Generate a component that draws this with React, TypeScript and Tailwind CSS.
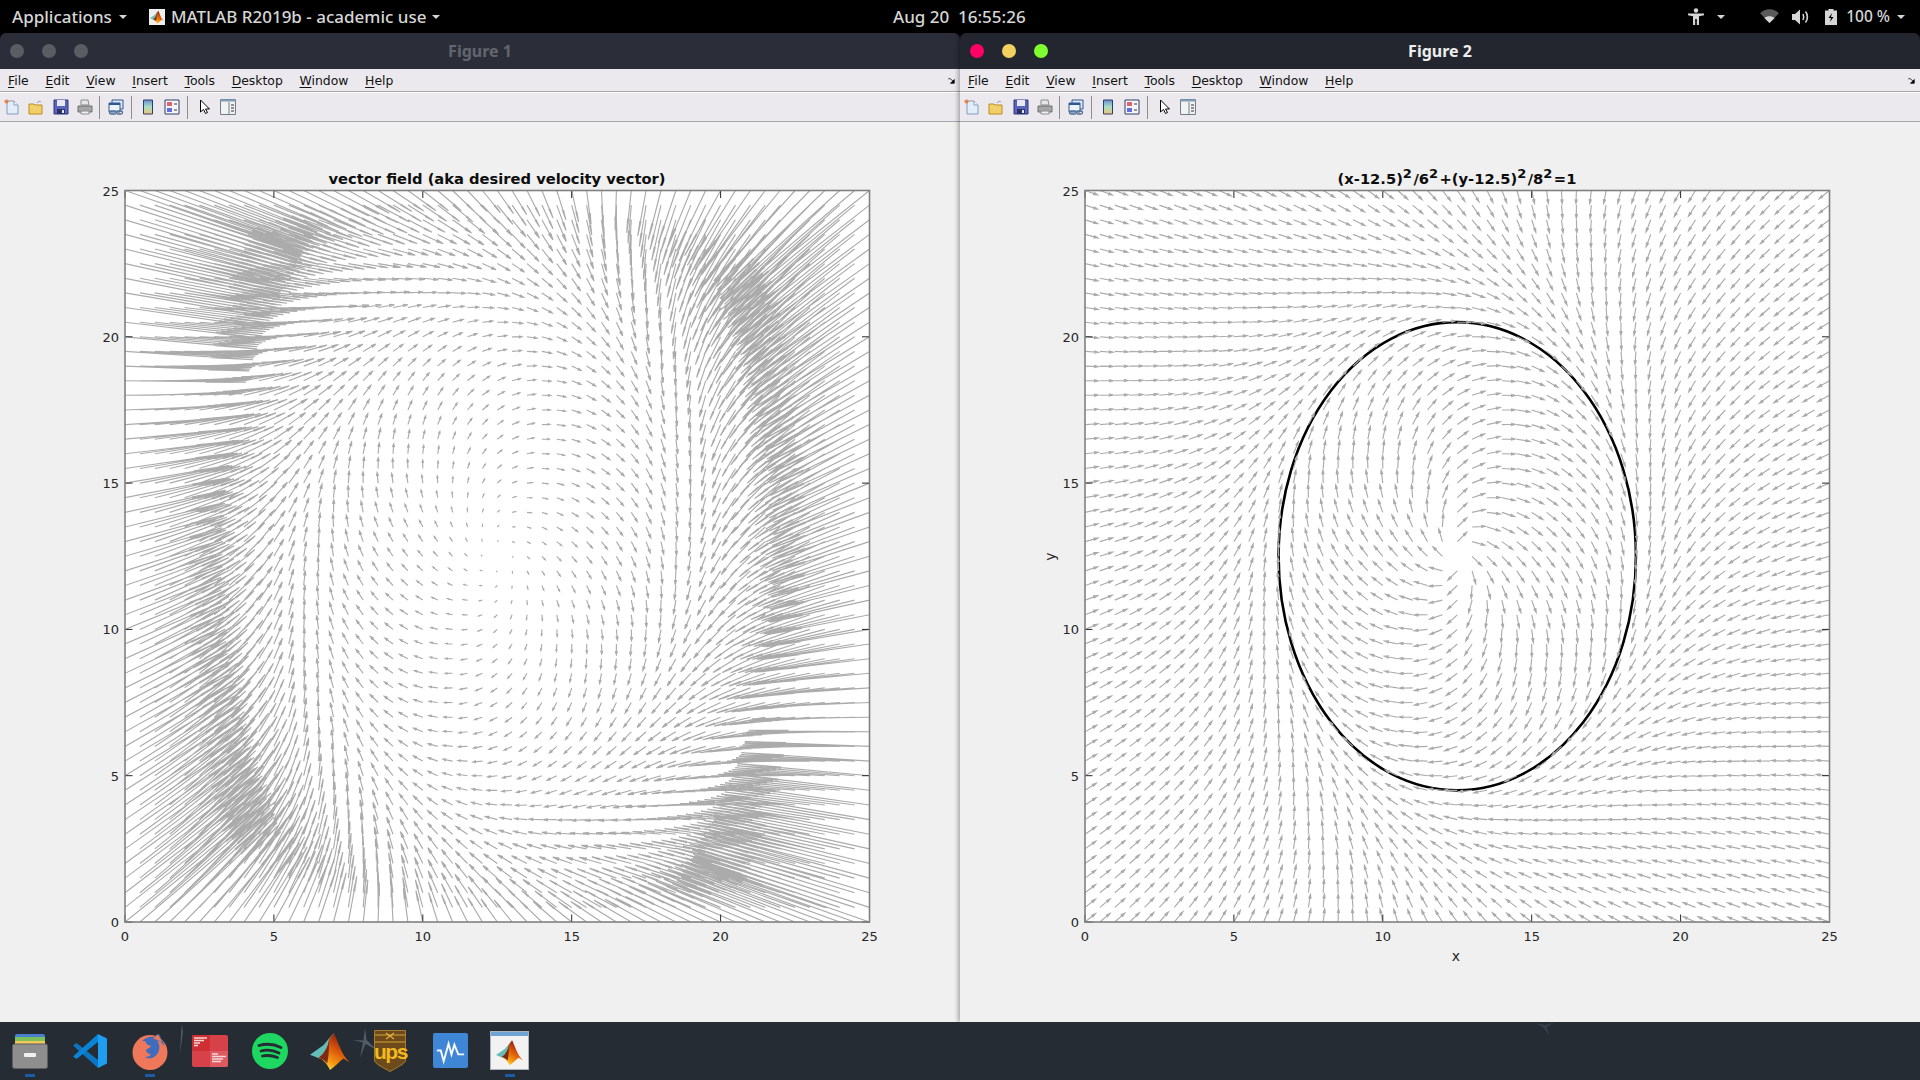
import { useMemo } from 'react';

// plot box inside the figure canvas (canvas starts at y=123 on the page)
const AX = { left: 125, right: 869.5, top: 68, bottom: 799.5 };
const px = (x: number) => AX.left + (x / 25) * (AX.right - AX.left);
const py = (y: number) => AX.bottom - (y / 25) * (AX.bottom - AX.top);

const field = (x: number, y: number) => {
    const dx = x - 12.5;
    const dy = y - 12.5;
    const phi = (dx * dx) / 36 + (dy * dy) / 64 - 1;
    const nx = (2 * dx) / 36;
    const ny = (2 * dy) / 64;
    return [ny - phi * nx, -nx - phi * ny];
};

const arrowPath = (x: number, y: number, u: number, v: number) => {
    const x0 = px(x);
    const y0 = py(y);
    const x1 = px(x + u);
    const y1 = py(y + v);
    const len = Math.hypot(x1 - x0, y1 - y0);
    if (len < 0.01) return '';
    const ex = (x1 - x0) / len;
    const ey = (y1 - y0) / len;
    // long arrows keep a long, slim head: it reads as a thicker last third of the line
    const back = len * 0.33;
    const half = len > 24 ? 0.55 : Math.min(len * 0.11, 1.2);
    const bx = x1 - ex * back;
    const by = y1 - ey * back;
    const f = (n: number) => n.toFixed(1);
    return (
        `M${f(x0)} ${f(y0)}L${f(x1)} ${f(y1)}` +
        `M${f(bx - ey * half)} ${f(by + ex * half)}L${f(x1)} ${f(y1)}L${f(bx + ey * half)} ${f(by - ex * half)}`
    );
};

const buildField = (normalized: boolean) => {
    let d = '';
    for (let i = 0; i <= 50; i++) {
        for (let j = 0; j <= 50; j++) {
            const x = i * 0.5;
            const y = j * 0.5;
            const [u, v] = field(x, y);
            const len = Math.hypot(u, v);
            if (len === 0) continue;
            d += normalized
                ? arrowPath(x, y, (u / len) * 0.45, (v / len) * 0.45)
                : arrowPath(x, y, u * 1.4, v * 1.4);
        }
    }
    return d;
};

const ticks = [0, 5, 10, 15, 20, 25];

function Plot({ id, normalized }: { id: string; normalized: boolean }) {
    const arrows = useMemo(() => buildField(normalized), [normalized]);
    return (
        <svg viewBox="0 0 960 899" className="block h-full w-full font-['DejaVu_Sans',sans-serif]">
            <defs>
                <clipPath id={id}>
                    <rect x={AX.left} y={AX.top} width={AX.right - AX.left} height={AX.bottom - AX.top} />
                </clipPath>
            </defs>
            <rect x={AX.left} y={AX.top} width={AX.right - AX.left} height={AX.bottom - AX.top} fill="#fff" />
            {normalized && (
                <ellipse
                    cx={px(12.5)}
                    cy={py(12.5)}
                    rx={px(18.5) - px(12.5)}
                    ry={py(4.5) - py(12.5)}
                    fill="none"
                    stroke="#000"
                    strokeWidth="2.6"
                />
            )}
            <path d={arrows} fill="none" stroke="#ababab" strokeWidth="1.15" clipPath={`url(#${id})`} />
            {ticks.map((t) => (
                <g key={t}>
                    <path
                        d={`M${px(t)} ${AX.bottom}v-7.5M${px(t)} ${AX.top}v7.5M${AX.left} ${py(t)}h7.5M${AX.right} ${py(t)}h-7.5`}
                        stroke="#262626"
                        strokeWidth="1"
                        fill="none"
                    />
                    <text x={px(t)} y={AX.bottom + 19} textAnchor="middle" fontSize="13" fill="#262626">
                        {t}
                    </text>
                    <text x={AX.left - 6} y={py(t) + 5} textAnchor="end" fontSize="13" fill="#262626">
                        {t}
                    </text>
                </g>
            ))}
            <rect
                x={AX.left}
                y={AX.top}
                width={AX.right - AX.left}
                height={AX.bottom - AX.top}
                fill="none"
                stroke="#808080"
                strokeWidth="1.6"
            />
            {normalized ? (
                <>
                    <text x="497" y="61" textAnchor="middle" fontSize="14.7" fontWeight="700" fill="#0d0d0d">
                        (x-12.5)<tspan fontSize="13" dy="-6">2</tspan>
                        <tspan dy="6" dx="1.5">/6</tspan>
                        <tspan fontSize="13" dy="-6">2</tspan>
                        <tspan dy="6" dx="1.5">+(y-12.5)</tspan>
                        <tspan fontSize="13" dy="-6">2</tspan>
                        <tspan dy="6" dx="1.5">/8</tspan>
                        <tspan fontSize="13" dy="-6">2</tspan>
                        <tspan dy="6" dx="1.5">=1</tspan>
                    </text>
                    <text x="496" y="838" textAnchor="middle" fontSize="14" fill="#262626">
                        x
                    </text>
                    <text transform="translate(95 434) rotate(-90)" textAnchor="middle" fontSize="14" fill="#262626">
                        y
                    </text>
                </>
            ) : (
                <text x="497" y="61" textAnchor="middle" fontSize="14.7" fontWeight="700" fill="#0d0d0d">
                    vector field (aka desired velocity vector)
                </text>
            )}
        </svg>
    );
}

function MatlabLogo({ className, id }: { className: string; id: string }) {
    return (
        <svg viewBox="0 0 42 42" className={className}>
            <defs>
                <linearGradient id={id} x1="0.75" y1="0.1" x2="0.25" y2="1">
                    <stop offset="0" stopColor="#8c1d10" />
                    <stop offset="0.4" stopColor="#d9560c" />
                    <stop offset="0.75" stopColor="#f79a10" />
                    <stop offset="1" stopColor="#ffe14a" />
                </linearGradient>
            </defs>
            <path d="M0 25L14 15L20 8L25 2L22 11L15 22L10 29Z" fill="#63bdb8" />
            <path d="M20 9L25 2C29 9 33 26 42 33L35 29C30 33 27 37 21 41C18 34 14 30 9 28C15 24 19 17 20 9Z" fill={`url(#${id})`} />
            <path d="M20 9C19 17 15 24 9 28C14 30 16 31 18 34C20 26 20 16 20 9Z" fill="#7a2a16" />
        </svg>
    );
}

function Toolbar({ id }: { id: string }) {
    return (
        <div className="flex h-[28px] items-center bg-[#ebe9ed] pl-[4px]">
            <svg viewBox="0 0 16 16" className="h-4 w-4">
                <path d="M3 2h7l4 4v9H3z" fill="#e3eefa" stroke="#7f9cc0" />
                <path d="M10 2v4h4" fill="#fff" stroke="#7f9cc0" />
                <circle cx="2.5" cy="2.5" r="2" fill="#ec7d3c" />
            </svg>
            <svg viewBox="0 0 16 16" className="ml-[8px] h-4 w-4">
                <path d="M1 5h5l1 1h7v9H1z" fill="#f3cf6a" stroke="#b78e1e" />
                <path d="M9 4c1-2 3-2 4-1" fill="none" stroke="#8aa0b8" />
            </svg>
            <svg viewBox="0 0 16 16" className="ml-[9px] h-4 w-4">
                <path d="M1 1h14v14H1z" fill="#5a64b8" stroke="#2d3580" />
                <path d="M4 1h8v6H4z" fill="#e8e8f0" />
                <path d="M4 10h8v5H4z" fill="#2b2f66" />
                <path d="M9 11h2v3H9z" fill="#e8e8f0" />
            </svg>
            <svg viewBox="0 0 16 16" className="ml-[8px] h-4 w-4">
                <path d="M4 1h7l1 5H4z" fill="#e6e6e6" stroke="#8c8c8c" />
                <path d="M1 7h14v6H1z" fill="#a5a5a5" stroke="#6f6f6f" />
                <path d="M4 12h8v3H4z" fill="#f0f0f0" stroke="#8c8c8c" />
            </svg>
            <div className="ml-[6px] h-[23px] w-[1px] bg-[#8f8f8f]" />
            <svg viewBox="0 0 16 16" className="ml-[8px] h-4 w-4">
                <path d="M4 1h11v9H4z" fill="#dfe8f4" stroke="#2e5a94" />
                <path d="M1 4h11v9H1z" fill="#eef3fa" stroke="#2e5a94" />
                <path d="M1 4h11v2H1z" fill="#2e5a94" />
                <path d="M3 12h4a1.500 1.500 0 010 3H3a1.500 1.500 0 010-3zM9 12h4a1.500 1.500 0 010 3H9" fill="none" stroke="#4d6d94" strokeWidth="1.300" />
            </svg>
            <div className="ml-[7px] h-[23px] w-[1px] bg-[#8f8f8f]" />
            <svg viewBox="0 0 12 16" className="ml-[10px] h-4 w-3">
                <defs>
                    <linearGradient id={id} x1="0" y1="0" x2="0" y2="1">
                        <stop offset="0" stopColor="#6f8fd8" />
                        <stop offset="0.5" stopColor="#a8e0c0" />
                        <stop offset="1" stopColor="#f0c27a" />
                    </linearGradient>
                </defs>
                <path d="M1.500 1h9v14h-9z" fill={`url(#${id})`} stroke="#2d3f66" />
            </svg>
            <svg viewBox="0 0 16 16" className="ml-[10px] h-4 w-4">
                <path d="M1 1h14v14H1z" fill="#f4f6fb" stroke="#2d3f66" />
                <path d="M3 3h5v4H3z" fill="#e2626a" />
                <path d="M3 9h5v4H3z" fill="#5f6fdc" />
                <path d="M10 5h3M10 11h3" stroke="#333" />
            </svg>
            <div className="ml-[7px] h-[23px] w-[1px] bg-[#8f8f8f]" />
            <svg viewBox="0 0 12 16" className="ml-[11px] h-4 w-3">
                <path d="M1.500 1v12l3-2.500 2 4 2-1-2-3.500h4z" fill="#fff" stroke="#000" />
            </svg>
            <svg viewBox="0 0 16 16" className="ml-[9px] h-4 w-4">
                <path d="M.500 .500h15v15H.500z" fill="#f2f2f2" stroke="#6f7f8f" />
                <path d="M.500 .500h15v2H.500z" fill="#7f9fb8" />
                <path d="M9 3v12" stroke="#6f7f8f" />
                <path d="M11 6h3M11 9h3M11 12h3" stroke="#333" />
            </svg>
        </div>
    );
}

const menus = ['File', 'Edit', 'View', 'Insert', 'Tools', 'Desktop', 'Window', 'Help'];

function FigureWindow({
    title,
    active,
    normalized,
    id,
}: {
    title: string;
    active: boolean;
    normalized: boolean;
    id: string;
}) {
    return (
        <section
            className={`flex h-full w-[960px] flex-col overflow-hidden rounded-t-md ${
                active ? 'relative shadow-[-2px_0_4px_rgba(0,0,0,0.3)]' : ''
            }`}
        >
            <div
                className={`relative flex h-[36px] items-center justify-center font-['Noto_Sans',sans-serif] text-[16px] font-bold ${
                    active ? 'bg-[#23262f] text-[#eeeeee]' : 'bg-[#2b2e39] text-[#63656e]'
                }`}
            >
                <div className="absolute left-[10px] flex gap-[18px]">
                    <span className={`h-[14px] w-[14px] rounded-full ${active ? 'bg-[#ff0066]' : 'bg-[#5b5d65]'}`} />
                    <span className={`h-[14px] w-[14px] rounded-full ${active ? 'bg-[#f2d060]' : 'bg-[#5b5d65]'}`} />
                    <span className={`h-[14px] w-[14px] rounded-full ${active ? 'bg-[#80ff30]' : 'bg-[#5b5d65]'}`} />
                </div>
                {title}
            </div>
            <div className="relative flex h-[23px] items-center gap-[16.7px] border-b border-[#a8a8a8] bg-[#ebe9ed] pl-[8px] pt-[2px] font-['DejaVu_Sans',sans-serif] text-[12.400px] text-[#111111]">
                {menus.map((m) => (
                    <span key={m}>
                        <span className="underline underline-offset-2">{m[0]}</span>
                        {m.slice(1)}
                    </span>
                ))}
                <svg viewBox="0 0 10 8" className="absolute right-[4px] top-[9px] h-[6px] w-[8px]">
                    <path d="M0 1h3M3 1l4 4M8 2v5H3z" fill="#000" stroke="#000" />
                </svg>
            </div>
            <div className="h-[1px] bg-white" />
            <Toolbar id={`${id}-cbar`} />
            <div className="h-[1px] bg-[#a8a8a8]" />
            <div className="min-h-0 flex-1 bg-[#f0f0f0]">
                <Plot id={id} normalized={normalized} />
            </div>
        </section>
    );
}

function Caret({ className }: { className: string }) {
    return <span className={`h-0 w-0 border-x-[4.500px] border-t-[4.500px] border-x-transparent border-t-[#d6d6d6] ${className}`} />;
}

function TopBar() {
    return (
        <header className="relative flex h-[33px] items-center bg-black font-['Noto_Sans',sans-serif] text-[17px] font-medium text-[#d6d6d6]">
            <div className="flex items-center pl-[12px]">
                Applications
                <Caret className="ml-[7px]" />
            </div>
            <div className="ml-[22px] flex items-center">
                <span className="flex h-[16px] w-[16px] items-center justify-center bg-[#eeeeee]">
                    <MatlabLogo id="mlTop" className="h-[14px] w-[14px]" />
                </span>
                <span className="ml-[6px]">MATLAB R2019b - academic use</span>
                <Caret className="ml-[6px]" />
            </div>
            <div className="absolute left-[893px] top-[4px] whitespace-pre">Aug 20  16:55:26</div>
            <div className="ml-auto flex items-center pr-[15px]">
                <svg viewBox="0 0 16 18" className="h-[18px] w-[16px]" fill="#d6d6d6">
                    <circle cx="8" cy="2.500" r="2.200" />
                    <path d="M0 5.500h16v1.800l-5 1V17H8.800v-6H7.200v6H5V8.300l-5-1z" />
                </svg>
                <Caret className="ml-[13px]" />
                <svg viewBox="0 0 20 16" className="ml-[35px] h-[15px] w-[19px]">
                    <path d="M0 4.500C5-1 15-1 20 4.500L10 15z" fill="#5a5a5a" />
                    <path d="M4.500 9.500C7.500 7 12.500 7 15.500 9.500L10 15z" fill="#d6d6d6" />
                </svg>
                <svg viewBox="0 0 18 16" className="ml-[13px] h-[16px] w-[18px]" fill="none">
                    <path d="M0 5h3l5-4.500v15L3 11H0z" fill="#d6d6d6" />
                    <path d="M11 5c1 2 1 4 0 6M13.500 2.500c2.500 3 2.500 8 0 11" stroke="#d6d6d6" strokeWidth="1.600" />
                </svg>
                <svg viewBox="0 0 12 16" className="ml-[15px] h-[16px] w-[12px]">
                    <path d="M3.500 0h5v1.500H12V16H0V1.500h3.500z" fill="#d6d6d6" />
                    <path d="M7 4L3.500 9H6l-1 4 3.500-5H6z" fill="#000" />
                </svg>
                <span className="ml-[9px] text-[15.500px]">100 %</span>
                <Caret className="ml-[7px]" />
            </div>
        </header>
    );
}

function Dock() {
    return (
        <footer className="relative h-[58px] bg-[#252c33]">
            <span className="absolute left-[25px] top-[52px] h-[3px] w-[10px] bg-[#1c5ca6]" />
            <span className="absolute left-[145px] top-[52px] h-[3px] w-[10px] bg-[#1c5ca6]" />
            <span className="absolute left-[505px] top-[52px] h-[3px] w-[10px] bg-[#1c5ca6]" />
            {/* files */}
            <svg viewBox="0 0 36 36" className="absolute left-[12px] top-[11px] h-[36px] w-[36px]">
                <path d="M3 3a2 2 0 012-2h26a2 2 0 012 2v6H3z" fill="#4a7fd0" />
                <path d="M3 4h30v4H3z" fill="#7cc05a" />
                <path d="M3 8h30v5H3z" fill="#f2c75c" />
                <rect x="0.500" y="11" width="35" height="24.500" rx="2" fill="#8e8e8e" stroke="#5f5f5f" />
                <rect x="12" y="20" width="12" height="4" rx="1" fill="#f0f0f0" />
            </svg>
            {/* vscode */}
            <svg viewBox="0 0 36 36" className="absolute left-[72px] top-[11px] h-[36px] w-[36px]">
                <path d="M1 12.500L4.500 10 26 27v8z" fill="#0a76c2" />
                <path d="M1 23.500L4.500 26 26 9V1z" fill="#0a84d6" />
                <path d="M26 1l9 4.500v25L26 35z" fill="#1f9df0" />
            </svg>
            {/* firefox */}
            <svg viewBox="0 0 36 38" className="absolute left-[132px] top-[10px] h-[38px] w-[36px]">
                <circle cx="18" cy="20.500" r="17.500" fill="#f0785a" />
                <path d="M10 9c3-3 8-5 13-4l4-3c1 2 2 3 2 5 2 2 3 4 3 7-2-3-4-5-7-5 3 3 3 8 1 12-3 5-9 7-13 4 3 0 5-1 6-3-3 0-5-2-5-4 2-2 4-2 5-4-2-1-4-1-5-3 0-1 0-2-4-2z" fill="#3f6dbd" />
                <path d="M25 2c2 2 4 5 5 9-3-3-6-4-9-4 1-1 3-2 4-5z" fill="#f0785a" />
            </svg>
            {/* faint streak behind the firefox icon */}
            <svg viewBox="0 0 4 30" className="absolute left-[179px] top-[2px] h-[30px] w-[4px] opacity-40">
                <path d="M3 0L4 8 1 30 2 8z" fill="#8a97a8" />
            </svg>
            {/* red notes */}
            <svg viewBox="0 0 36 32" className="absolute left-[192px] top-[13px] h-[32px] w-[36px]">
                <rect width="36" height="32" rx="2" fill="#d7424a" />
                <path d="M2 0h16v16H0V2a2 2 0 012-2z" fill="#cf2f33" />
                <path d="M18 16h18v14a2 2 0 01-2 2H18z" fill="#de5a60" />
                <path d="M2 3h13M2 5.500h10M2 8h6M2 10.500h4M20 19h6M20 21.500h14M20 24h11M20 26.500h9" stroke="#f3d8d8" strokeWidth="1.300" />
            </svg>
            {/* spotify */}
            <svg viewBox="0 0 36 36" className="absolute left-[252px] top-[11px] h-[36px] w-[36px]" fill="none">
                <circle cx="18" cy="18" r="18" fill="#1ed760" />
                <path d="M7 12.500c7-2 15-1.500 22 2M9 18c6-1.500 12-1 18 2M10.500 23c5-1 10-.5 15 1.500" stroke="#252c33" strokeWidth="2.800" strokeLinecap="round" />
            </svg>
            {/* matlab */}
            <MatlabLogo id="mlDock" className="absolute left-[309px] top-[9px] h-[40px] w-[42px]" />
            {/* glint */}
            <svg viewBox="0 0 24 30" className="absolute left-[353px] top-[6px] h-[30px] w-[24px] opacity-50">
                <path d="M12 0l1.500 12L24 22 12.500 16 7 30l3-15.500L0 12l10.500 .500z" fill="#7f8c9c" />
            </svg>
            {/* ups */}
            <div className="absolute left-[374px] top-[8px] h-[42px] w-[32px]">
                <svg viewBox="0 0 32 42" className="absolute inset-0 h-full w-full">
                    <path d="M.500 .500h31V30c0 4-10 8-15.500 11.500C10 38 .500 34 .500 30z" fill="#6c4a1c" stroke="#a87f2c" />
                    <path d="M1 5h30M1 12h30" stroke="#d8a436" strokeWidth="1" />
                    <path d="M12 3l8 6M20 3l-8 6" stroke="#e6b23c" strokeWidth="1.200" />
                </svg>
                <span className="absolute inset-x-0 top-[10px] text-center font-['Liberation_Sans',sans-serif] text-[21px] font-bold leading-[24px] tracking-[-1.500px] text-[#f2b91e]">
                    ups
                </span>
            </div>
            {/* wave */}
            <svg viewBox="0 0 36 36" className="absolute left-[433px] top-[11px] h-[35px] w-[35px]" fill="none">
                <rect width="36" height="36" rx="2" fill="#3f87d6" />
                <path d="M4 18h4l3 11 5-18 3 11 3-10 4 10 3 0 3 0" stroke="#f4f8fc" strokeWidth="2" />
            </svg>
            {/* matlab window */}
            <div className="absolute left-[490px] top-[9px] h-[39px] w-[39px] border border-[#aab2ba] bg-[#f2f2f2]">
                <div className="h-[4px] bg-[#6fa3d4]" />
                <MatlabLogo id="mlWin" className="mx-auto mt-[3px] h-[27px] w-[27px]" />
            </div>
            <svg viewBox="0 0 20 20" className="absolute left-[1536px] top-[0px] h-[20px] w-[20px] opacity-30">
                <path d="M0 1l9 2 10-3-8 5 2 9-5-8z" fill="#5a6673" />
            </svg>
        </footer>
    );
}

export default function App() {
    return (
        <div className="flex h-screen w-[1920px] flex-col overflow-hidden bg-black">
            <TopBar />
            <main className="flex min-h-0 flex-1">
                <FigureWindow title="Figure 1" active={false} normalized={false} id="fig1" />
                <FigureWindow title="Figure 2" active normalized id="fig2" />
            </main>
            <Dock />
        </div>
    );
}
